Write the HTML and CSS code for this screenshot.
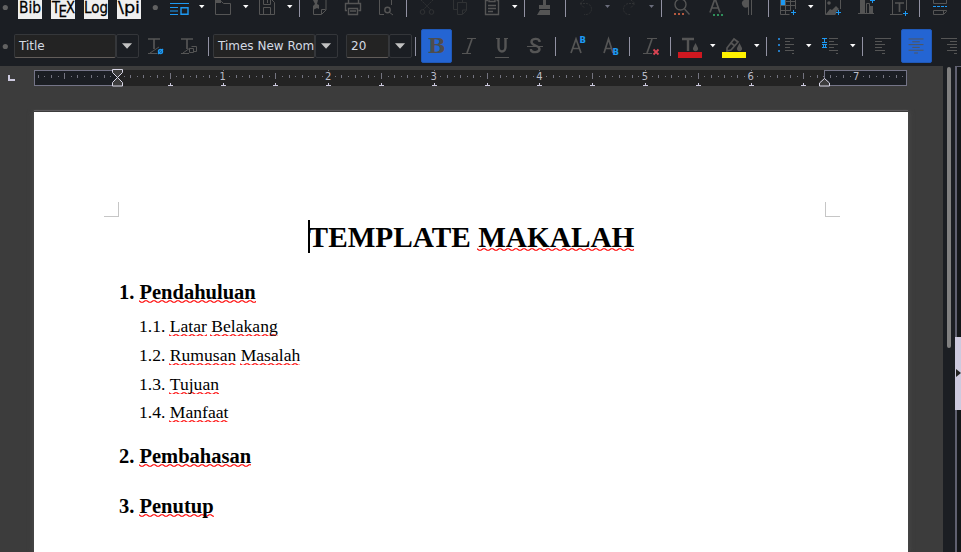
FILE: index.html
```html
<!DOCTYPE html>
<html lang="id">
<head>
<meta charset="utf-8">
<title>Template Makalah</title>
<link rel="stylesheet" href="styles.css">
</head>
<body>
<div class="app">
  <header class="toolbars">
    <div class="toolbar standard">
      <svg viewBox="0 0 18 28"><circle class="dot" cx="5.3" cy="7.5" r="2.6"/></svg>
      <svg class="tile" viewBox="0 0 24 19"><text x="1" y="12.500" textLength="22" lengthAdjust="spacingAndGlyphs">Bib</text></svg>
      <svg class="tile" viewBox="0 0 24 19"><text x="1" y="12.500" textLength="8" lengthAdjust="spacingAndGlyphs">T</text><text x="7.500" y="16.500" textLength="8.500" lengthAdjust="spacingAndGlyphs">E</text><text x="15" y="12.500" textLength="9" lengthAdjust="spacingAndGlyphs">X</text></svg>
      <svg class="tile" viewBox="0 0 24 19"><text x="0" y="12.500" textLength="24" lengthAdjust="spacingAndGlyphs">Log</text></svg>
      <svg class="tile" viewBox="0 0 24 19"><text x="1" y="12.500" textLength="22" lengthAdjust="spacingAndGlyphs">\pi</text></svg>
      <svg viewBox="141 0 24 28"><circle class="dot" cx="155.3" cy="7.5" r="2.6"/></svg>
      <svg viewBox="165 0 46 28"><path class="blue" d="M170 3.500h19M170 7.500h8M170 14.500h8M170 11h8"/><path class="blue strong" d="M181 7.700h7v6.600h-7z"/><path class="arrow" d="M199 5h5.500l-2.700 3.200z"/></svg>
      <svg viewBox="211 0 44 28"><path class="ink" d="M215.500 0v14.500h15v-11h-7l-2-2h-6"/><path class="fill" d="M215 0h6v3h-6z"/><path class="arrow" d="M243 5h5.500l-2.700 3.200z"/></svg>
      <svg viewBox="255 0 44 28"><path class="ink" d="M259.500 0v14.500h15v-12l-3-3M263.500 0v4.500h7v-5M263.500 14v-6.500h7v6.500M267.500 0v3"/><path class="arrow" d="M287 5h5.500l-2.700 3.200z"/></svg>
      <svg viewBox="299 0 10 28"><path class="sep" d="M299 0h1v17h-1z"/></svg>
      <svg viewBox="309 0 32 28"><path class="ink" d="M313.500 8v6.500h8l4.500-4.500v-10M321.500 14v-4.500h4"/><path class="fill" d="M313 0h5l-1 4 2 1 0 4-2-1-4 2v-4l2-2z"/></svg>
      <svg viewBox="341 0 34 28"><path class="ink strong" d="M348.500 0v3M358.500 0v3M347 10.500h-1.500v-7h15v7h-2M348.500 8.500h9v6h-9zM350 11h6"/></svg>
      <svg viewBox="375 0 31 28"><path class="ink" d="M384 14.500h-4.500v-14.500M391.500 0v5M389 12l4 3"/><circle class="ink strong" cx="387.500" cy="10" r="2.700"/></svg>
      <svg viewBox="406 0 10 28"><path class="sep" d="M406 0h1v17h-1z"/></svg>
      <svg viewBox="416 0 33 28"><path class="faint" stroke-dasharray="2 1" d="M421 0l10 10M433 0l-10 10"/><circle class="faint" cx="422.500" cy="12" r="2.300"/><circle class="faint" cx="431.500" cy="12" r="2.300"/></svg>
      <svg viewBox="449 0 32 28"><path class="faint" d="M453.500 0v9.500h4M462.500 0v2M457.500 2.500h9v8l-4 4h-5zM462.500 14v-4h4"/></svg>
      <svg viewBox="481 0 43 28"><path class="ink strong" d="M488 .5h-2.500v14h13v-14h-2M489 0v1.500h6v-1.500M488 5.500h8M488 8.500h8M488 11.500h5"/><path class="arrow" d="M512 5h5.500l-2.700 3.200z"/></svg>
      <svg viewBox="524 0 10 28"><path class="sep" d="M524 0h1v17h-1z"/></svg>
      <svg viewBox="534 0 31 28"><path class="fill" d="M543 0h3v5h4v4h-11v-4h4zM540 10h10v5h-13z"/></svg>
      <svg viewBox="565 0 10 28"><path class="sep" d="M565 0h1v17h-1z"/></svg>
      <svg viewBox="575 0 44 28"><path class="faint" stroke-dasharray="2 1" d="M584 0l-4 3.500 4 4M580 3.500h6a5.500 5.500 0 0 1 0 11h-2"/><path class="arrow dim" d="M605 5h5l-2.500 3z"/></svg>
      <svg viewBox="619 0 42 28"><path class="faint" stroke-dasharray="2 1" d="M631 0l4 3.500-4 4M634 3.500h-5a5.500 5.500 0 0 0 0 11h2"/><path class="arrow dim" d="M649 5h5l-2.500 3z"/></svg>
      <svg viewBox="661 0 10 28"><path class="sep" d="M661 0h1v17h-1z"/></svg>
      <svg viewBox="671 0 34 28"><circle class="ink strong" cx="680.500" cy="4.500" r="5.500"/><path class="ink strong" d="M684.500 9l5 5.500"/><path fill="#b5593f" d="M674 13h2v2h-2zm4 0h2v2h-2zm4 0h2v2h-2z"/></svg>
      <svg viewBox="705 0 35 28"><path class="ink wide" d="M710 12.500l5-14 5 14M711.500 8h7"/><path fill="#2f8f5b" d="M713 14h2v2h-2zm4 0h2v2h-2zm4 0h2v2h-2z"/></svg>
      <svg viewBox="740 0 28 28"><path class="fill" d="M748 0v7a4 4 0 0 1-4-7zM748 0h1v15h-1zM751 0h1v15h-1z"/></svg>
      <svg viewBox="768 0 8 28"><path class="sep" d="M768 0h1v17h-1z"/></svg>
      <svg viewBox="776 0 44 28"><path class="ink" d="M780.500 0v14.500h9M785.500 0v15M790.500 0v10M795.500 0v9M780 5.500h16M780 10.500h11M786 1.500h10"/><path class="bluefill" d="M781 0h4v5h-4z"/><path class="blue" d="M791 12.500h5M793.500 10v5"/><path class="arrow" d="M808 5h5.500l-2.700 3.200z"/></svg>
      <svg viewBox="820 0 34 28"><path class="ink" d="M825.500 0v14.500h10M840.500 0v9"/><circle class="fill" cx="829" cy="3" r="1.800"/><path class="fill" d="M826 14l4-5 2 1 4-4 3 3-3 3v2z"/><path class="blue" d="M836 12.500h5M838.500 10v5"/></svg>
      <svg viewBox="854 0 33 28"><path class="ink" d="M858 13.500h16M860.500 0v13M864.500 0v13M866.500 13v-9.500h3v9.500"/><path class="fill" d="M860 0h4v13h-4zM870 6h3v7h-3z"/><path class="blue" d="M870 .5h5M872.500 0v3"/></svg>
      <svg viewBox="887 0 32 28"><path class="ink" d="M892.500 0v14.500h10M906.500 0v10M890 14.500h3"/><path class="ink wide" d="M895 3h9M899.500 3v9"/><path class="blue" d="M903 13.500h5M905.500 11v5"/></svg>
      <svg viewBox="919 0 10 28"><path class="sep" d="M919 0h1v17h-1z"/></svg>
      <svg viewBox="929 0 32 28"><path class="ink" d="M933.500 0v3.500h13v-3.500M933.500 14.500v-4h13v1l-3 3zM943.500 14v-3"/><path class="blue" stroke-dasharray="3 1" d="M933 6.500h14"/></svg>
    </div>

    <div class="toolbar formatting">
      <svg viewBox="0 28 14 38"><circle class="dot" cx="5.300" cy="46.500" r="2.600"/></svg>
      <span class="field">Title</span>
      <svg class="drop" viewBox="0 0 22 24"><path d="M5 9h11l-5.500 6z"/></svg>
      <svg viewBox="138 28 36 38"><path class="ink wide" d="M148 39h12M154 39v10"/><path class="ink" d="M148 53.500h9M150 53l9-6"/><circle class="blue strong" cx="160.500" cy="51.500" r="2"/><path class="blue strong" d="M158 54l5-5"/></svg>
      <svg viewBox="174 28 34 38"><path class="ink wide" d="M181 39h12M187 39v10"/><path class="ink" d="M181 53.500h8M183 53l7-5M189.500 48.500h4v4h-4zM191.500 46.500h5v5h-3"/></svg>
      <svg viewBox="208 28 5 38"><path class="sep" d="M208 37h1v19h-1z"/></svg>
      <span class="field">Times New Rom</span>
      <svg class="drop" viewBox="0 0 23 24"><path d="M5.500 9h11l-5.500 6z"/></svg>
      <span class="field size">20</span>
      <svg class="drop" viewBox="0 0 23 24"><path d="M5.500 9h11l-5.500 6z"/></svg>
      <svg viewBox="412 28 9 38"><path class="sep" d="M415 37h1v19h-1z"/></svg>
      <span class="toggle bold">B</span>
      <svg viewBox="452 28 34 38"><path class="ink" d="M467 38.500h9M462 53.500h9"/><path class="ink wide" d="M472 39l-5 14"/></svg>
      <svg viewBox="486 28 34 38"><path class="ink heavy" d="M498.500 38v9a3.500 4.500 0 0 0 7 0v-9"/><path class="ink" d="M495 57.500h14M496 38.500h4M504 38.500h4"/></svg>
      <svg viewBox="520 28 35 38"><path class="ink heavy" d="M539.500 42v-1c-1-3-8-3-8 1s8 3 8 7-8 4-8.500 1v-1"/><path class="ink" d="M527 46.500h16"/></svg>
      <svg viewBox="555 28 10 38"><path class="sep" d="M555 37h1v19h-1z"/></svg>
      <svg viewBox="565 28 33 38"><path class="ink wide" d="M571 53l5-14 5 14M572.500 48.500h7"/><text class="script" x="579.500" y="43">B</text></svg>
      <svg viewBox="598 28 31 38"><path class="ink wide" d="M604 53l4.500-14 4.500 14M605.500 48.500h6"/><text class="script" x="612.500" y="54.500">B</text></svg>
      <svg viewBox="629 28 8 38"><path class="sep" d="M629 37h1v19h-1z"/></svg>
      <svg viewBox="637 28 33 38"><path class="ink" d="M647 38.500h10M643 53.500h9"/><path class="ink wide" d="M652 39l-5 14"/><path class="cross" d="M653.500 49.500l5 5M658.500 49.500l-5 5"/></svg>
      <svg viewBox="670 28 8 38"><path class="sep" d="M670 37h1v19h-1z"/></svg>
      <svg viewBox="678 28 42 38"><path class="ink heavy" d="M682 39h12M688 39v12"/><path class="fill" d="M695.500 43l2.500 5a2.600 2.600 0 1 1-5 0z"/><path fill="#cf1820" d="M678 52h24v6h-24z"/><path class="arrow" d="M710 44h5.500l-2.700 3.200z"/></svg>
      <svg viewBox="720 28 46 38"><path class="ink wide" d="M727 48l7-9 4 3-7 8-4 1zM731 43l4 3"/><path class="fill" d="M739.500 43l2.500 5a2.600 2.600 0 1 1-5 0z"/><path fill="#fff200" d="M722 52h24v6h-24z"/><path class="arrow" d="M754 44h5.500l-2.700 3.200z"/></svg>
      <svg viewBox="766 28 8 38"><path class="sep" d="M766 37h1v19h-1z"/></svg>
      <svg viewBox="774 28 44 38"><path class="bluefill soft" d="M778 38h2v2h-2zM778 44h2v2h-2zM778 50h2v2h-2z"/><path class="ink" d="M785 38.500h9M785 41.500h5M785 44.500h9M785 47.500h5M785 50.500h9M792 53.500h2"/><path class="arrow" d="M806 44h5.500l-2.700 3.200z"/></svg>
      <svg viewBox="818 28 44 38"><path class="blue" d="M822 38.500h5M822 42.500h5M824.500 38v5M822 44.500h5M822 47.500h5M823.500 44v4M825.500 44v4"/><path class="ink" d="M829 38.500h9M829 41.500h5M829 44.500h9M829 47.500h5M829 50.500h9M836 53.500h2"/><path class="arrow" d="M850 44h5.500l-2.700 3.200z"/></svg>
      <svg viewBox="862 28 10 38"><path class="sep" d="M862 37h1v19h-1z"/></svg>
      <svg viewBox="872 28 29 38"><path class="ink" d="M875 38.500h16M875 41.500h7M875 44.500h10M875 47.500h7M875 50.500h10M882 53.500h3"/></svg>
      <svg class="toggle" viewBox="901 29 31 34"><path class="ink" d="M908 38.500h16M912 41.500h8M908 44.500h16M912 47.500h8M908 50.500h16M914 53.500h4"/></svg>
      <svg viewBox="932 28 29 38"><path class="ink" d="M941 38.500h16M950 41.500h7M947 44.500h10M950 47.500h7M947 50.500h10M954 53.500h3"/></svg>
    </div>
  </header>

  <main class="workspace">
    <section class="view">
      <svg class="ruler" viewBox="0 66 943 46" id="ruler">
        <path class="tabmark" d="M8 75h2v4h5v2h-7z"/>
        <path class="track" d="M34 70h873v16h-873z"/>
        <path class="outside" d="M34.500 70.500h83v15h-83zM824.500 70.500h82v15h-82z"/>
        <path class="ticks" id="ticks"/>
        <path class="tabs" id="tabs"/>
        <g id="numbers"></g>
        <path class="indent" d="M112.500 69.500h10v3l-5 5-5-5zM117.500 77.500l5 5v3.500h-10v-3.500zM824.500 78.500l5 4.500v3h-10v-3z"/>
      </svg>
      <article class="page">
        <div class="corners"><i class="corner left"></i><i class="corner right"></i></div>
        <h1><span class="caret"></span>TEMPLATE <u>MAKALAH</u></h1>
        <h2>1. <u>Pendahuluan</u></h2>
        <ol>
          <li>1.1. <u>Latar</u> <u>Belakang</u></li>
          <li>1.2. <u>Rumusan</u> <u>Masalah</u></li>
          <li>1.3. <u>Tujuan</u></li>
          <li>1.4. <u>Manfaat</u></li>
        </ol>
        <h2>2. <u>Pembahasan</u></h2>
        <h2>3. <u>Penutup</u></h2>
      </article>
    </section>
    <div class="scrollbar"><div class="thumb"></div></div>
    <aside class="sidebar"><div class="handle"><svg viewBox="0 0 6 8"><path d="M1 0l5 4-5 4z"/></svg></div></aside>
  </main>
</div>
<script src="ruler.js"></script>
</body>
</html>
```
FILE: styles.css
```css
* { box-sizing: border-box; }
body { margin: 0; overflow: hidden; background: #1b1e23; }
.app { width: 961px; height: 552px; display: flex; flex-direction: column; }
svg { display: block; width: 100%; height: 100%; overflow: hidden; }

.toolbars { height: 66px; flex: none; background: #1b1e23; }
.toolbar { display: grid; justify-content: start; }
.standard {
  height: 28px;
  grid-template-rows: 28px;
  grid-template-columns: 18px 33px 33px 33px 24px 24px 46px 44px 44px 10px 32px 34px 31px 10px 33px 32px 43px 10px 31px 10px 44px 42px 10px 34px 35px 28px 8px 44px 34px 33px 32px 10px 32px;
}
.formatting {
  height: 38px;
  grid-template-rows: 38px;
  grid-template-columns: 14px 102px 22px 36px 34px 5px 102px 31px 43px 23px 9px 31px 34px 34px 35px 10px 33px 31px 8px 33px 8px 42px 46px 8px 44px 44px 10px 29px 31px 29px;
}

.dot { fill: #616161; }
.sep { fill: #9292a3; }
.ink, .faint, .blue, .cross { fill: none; stroke-width: 1; }
.ink { stroke: #555; }
.faint { stroke: #303234; }
.strong { stroke-width: 1.4; }
.wide { stroke-width: 1.7; }
.heavy { stroke-width: 2.4; }
.fill { fill: #555; }
.blue { stroke: #1d99f3; }
.blue.strong { stroke-width: 1.4; }
.bluefill { fill: #1d99f3; }
.soft { fill: #2479c0; }
.cross { stroke: #da4453; stroke-width: 1.8; }
.arrow { fill: #fcfcfc; }
.dim { fill: #6b6d7c; }
.script { font: bold 8.500px "DejaVu Sans", sans-serif; fill: #1d99f3; }

.tile { width: 24px; height: 19px; background: #efefef; }
.tile text { font: 16.500px "DejaVu Sans", sans-serif; fill: #000; stroke: #000; stroke-width: .3; }

.field {
  align-self: start; height: 24px; margin-top: 6px; padding: 0 4px;
  overflow: hidden; white-space: nowrap;
  background: #232323; color: #d3dae3;
  border: 1px solid #35373a; border-bottom-color: #625d5a; border-radius: 2px;
  font: 12px/22px "DejaVu Sans", sans-serif;
}
.drop {
  width: 23px; height: 24px; margin-top: 6px;
  border: 1px solid #34363a; border-radius: 2px; fill: #c2c2c2;
}
.size { width: 43px; }
.toggle { width: 31px; height: 34px; margin-top: 1px; background: #2465d3; border-radius: 2px; border: 1px solid #2059b8; }
.bold { color: #4d4d4d; text-align: center; font: bold 21px/32px "DejaVu Serif", serif; }

.workspace { flex: 1; min-height: 0; display: flex; background: #3c3c3c; }
.view { width: 943px; display: flex; flex-direction: column; }
.ruler { height: 46px; flex: none; shape-rendering: crispEdges; }
.tabmark, .tabs { fill: #cdcadf; }
.track { fill: #232323; }
.outside { fill: #1b1e23; stroke: #747487; }
.ticks { fill: #747480; }
.indent { fill: #3c3c3c; stroke: #d8d6e6; shape-rendering: auto; }
.ruler text { font: 10px "DejaVu Sans", sans-serif; fill: #b9bcc8; text-anchor: middle; }

.page {
  flex: 1; min-height: 0; width: 874px; margin-left: 34px; overflow: hidden;
  background: #fff; color: #000;
  box-shadow: 0 -1px 0 #3c3c3c, 0 -2px 0 #5c5a5d, 0 0 5px 1px #4c4c4c;
  clip-path: inset(-3px -8px 0 -8px);
  font-family: "Liberation Serif", serif;
}
.corners { display: flex; justify-content: space-between; padding: 90px 68px 0 70px; height: 105px; }
.corner { width: 15px; height: 15px; border: 0 solid #c6c6c6; border-bottom-width: 1px; }
.corner.left { border-right-width: 1px; }
.corner.right { border-left-width: 1px; }
h1, h2, ol { margin: 0; padding: 0; font-weight: bold; white-space: pre; }
h1 { margin-top: 3px; font-size: 29.3px; line-height: 34px; display: flex; justify-content: center; }
.caret { width: 2px; height: 33px; margin-right: -1px; background: #000; }
h2 { margin: 26px 0 0 85px; font-size: 20.5px; line-height: 24px; }
ol { margin: 12px 0 0 105px; list-style: none; font-weight: normal; font-size: 17.6px; line-height: 20px; white-space: normal; }
li + li { margin-top: 8.800px; }
ol + h2 { margin-top: 21.600px; }
u {
  display: inline-block; text-decoration: none; margin-left: -1px; padding-left: 1px;
  background: url("data:image/svg+xml,%3Csvg xmlns='http://www.w3.org/2000/svg' width='8' height='3'%3E%3Cpath d='M-1 2L0 2.400Q2 2.400 4 1T8 2.400' fill='none' stroke='none'/%3E%3Cpath d='M-2 .7L0 .7L2 2.300L4 2.300L6 .7L8 .7L10 2.300' fill='none' stroke='%23f00' stroke-width='1.1'/%3E%3C/svg%3E") repeat-x 0 18px;
}
h1 u { background-position-y: 28px; }
h2 u { background-position-y: 20px; }

.scrollbar { width: 12px; background: #1b1e23; padding: 1px 4px; }
.thumb { height: 281px; border-radius: 2px; background: #808080; }
.sidebar { width: 6px; background: #14171a; border-left: 2px solid #5f6070; border-top: 1px solid #5f6070; padding-top: 270px; }
.handle { width: 6px; height: 73px; margin-left: -2px; padding-top: 32px; background: #cdcadf; }
.handle svg { width: 6px; height: 8px; fill: #232323; }
```
FILE: ruler.js
```js
const inch = 105.6, origin = 117;
let ticks = "", tabs = "";
for (let k = -12; k <= 119; k++) {
  const x = Math.round(origin + k * inch / 16);
  if (x < 36 || x > 904 || k === 0) continue;
  if (k % 16 === 0) ticks += `M${x} 70h1v1h-1z`;
  else if (k % 8 === 0) ticks += `M${x} 73h1v6h-1z`;
  else if (k % 2 === 0) ticks += `M${x} 75h1v3h-1z`;
  else ticks += `M${x} 76h1v1h-1z`;
  if (k > 0 && k % 8 === 0 && x < 824) tabs += `M${x} 83h1v2h2v1h-5v-1h2z`;
}
document.getElementById("ticks").setAttribute("d", ticks);
document.getElementById("tabs").setAttribute("d", tabs);
for (let n = 1; n <= 7; n++) {
  const t = document.createElementNS("http://www.w3.org/2000/svg", "text");
  t.setAttribute("x", origin + n * inch);
  t.setAttribute("y", 80);
  t.textContent = n;
  document.getElementById("numbers").append(t);
}
```
